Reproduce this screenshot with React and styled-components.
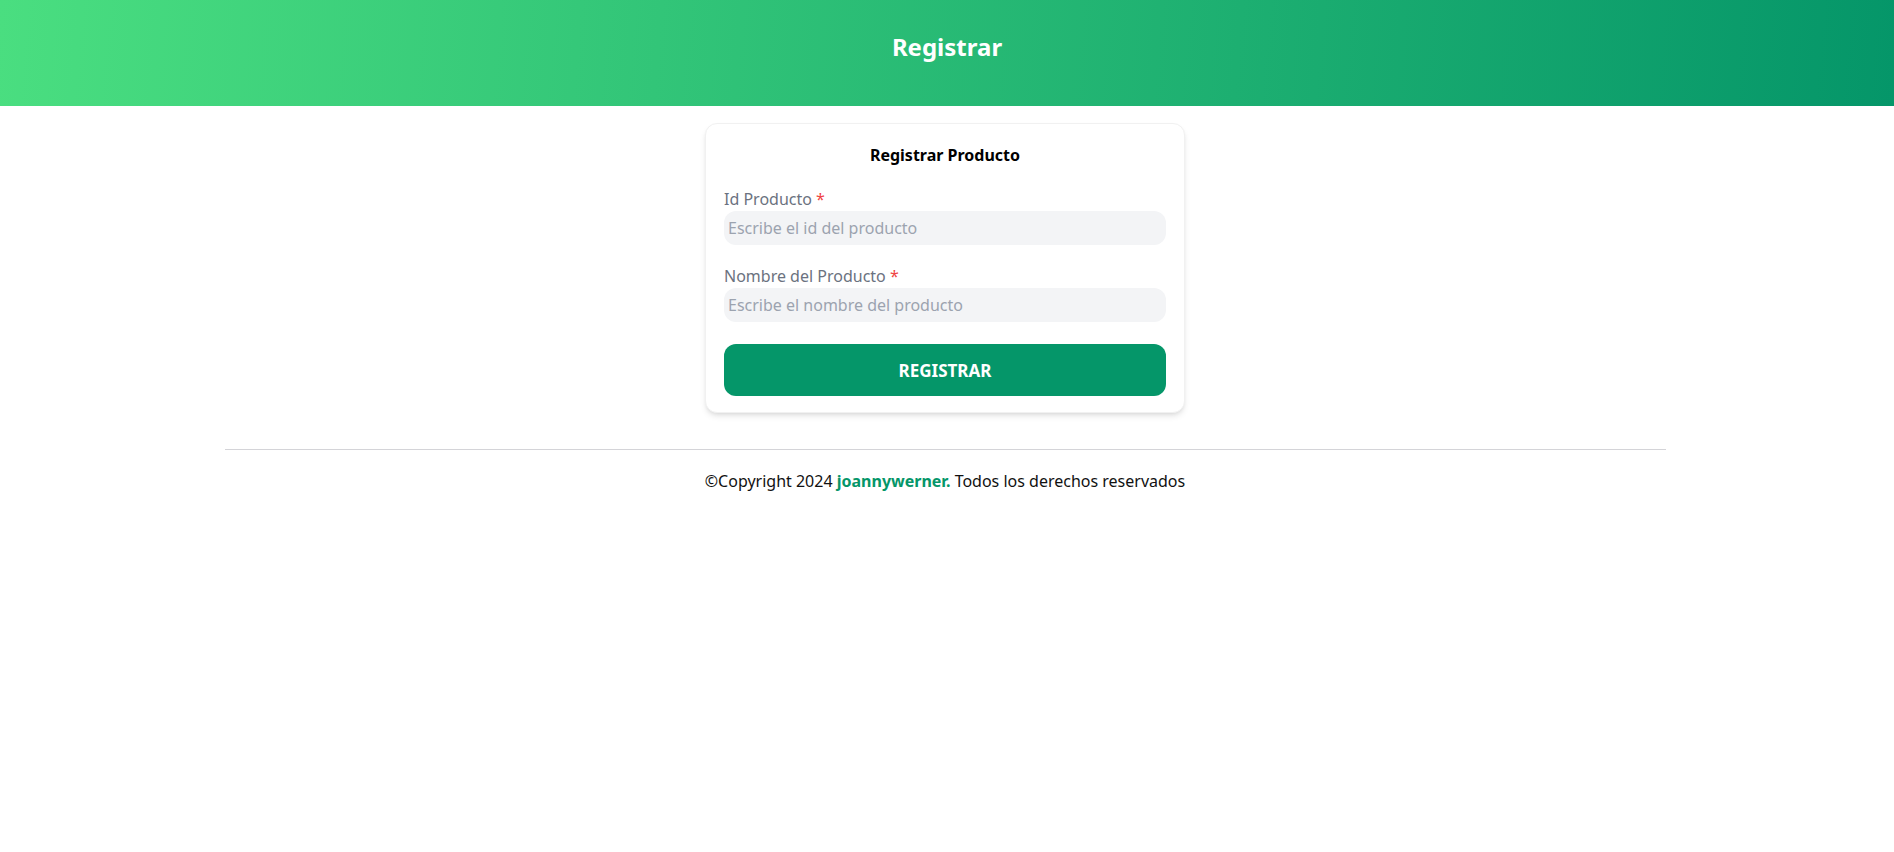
import styled, { createGlobalStyle } from "styled-components";

const GlobalStyle = createGlobalStyle`
  * {
    box-sizing: border-box;
  }
  body {
    margin: 0;
    background: #ffffff;
    font-family: "Noto Sans", "Open Sans", sans-serif;
    color: #111827;
  }
`;

const Header = styled.header`
  height: 106px;
  padding-top: 31px;
  background: linear-gradient(95deg, #4ade80, #059669);
  display: flex;
  justify-content: center;
  align-items: flex-start;
`;

const HeaderTitle = styled.h1`
  margin: 0;
  font-size: 24px;
  line-height: 32px;
  font-weight: 700;
  color: #ffffff;
`;

const Main = styled.main`
  display: flex;
  flex-direction: column;
  align-items: center;
  padding-right: 4px;
`;

const Card = styled.div`
  width: 480px;
  margin-top: 17px;
  padding: 17px 18px 16px;
  background: #ffffff;
  border: 1px solid #f1f1f1;
  border-radius: 12px;
  box-shadow: 0 4px 6px -1px rgba(0, 0, 0, 0.1), 0 2px 4px -2px rgba(0, 0, 0, 0.1);
`;

const CardTitle = styled.h2`
  margin: 0;
  font-size: 16px;
  line-height: 28px;
  font-weight: 700;
  color: #000000;
  text-align: center;
`;

const Field = styled.div`
  display: flex;
  flex-direction: column;
  margin-top: ${(props) => props.$top}px;
`;

const Label = styled.label`
  font-size: 16px;
  line-height: 24px;
  color: #6b7280;
`;

const Required = styled.span`
  color: #ef4444;
`;

const Input = styled.input`
  height: 34px;
  width: 100%;
  border: none;
  border-radius: 12px;
  background: #f3f4f6;
  padding: 0 4px;
  font-family: inherit;
  font-size: 16px;
  color: #111827;
  &:focus {
    outline: none;
  }
  &::placeholder {
    color: #9ca3af;
  }
`;

const SubmitButton = styled.button`
  width: 100%;
  height: 52px;
  margin-top: 22px;
  border: none;
  border-radius: 12px;
  background: #059669;
  color: #ffffff;
  font-family: inherit;
  font-size: 17px;
  font-weight: 700;
  cursor: pointer;
`;

const Divider = styled.hr`
  width: 1441px;
  margin: 36px 0 0;
  border: none;
  border-top: 1px solid #d4d4d8;
`;

const Footer = styled.p`
  margin: 19px 0 0;
  font-size: 16px;
  line-height: 24px;
  color: #111111;
`;

const Brand = styled.span`
  color: #059669;
  font-weight: 700;
`;

const App = () => {
  return (
    <>
      <GlobalStyle />
      <Header>
        <HeaderTitle>Registrar</HeaderTitle>
      </Header>

      <Main>
        <Card>
          <CardTitle>Registrar Producto</CardTitle>

          <form onSubmit={(e) => e.preventDefault()}>
            <Field $top={18}>
              <Label htmlFor="idProducto">
                Id Producto <Required>*</Required>
              </Label>
              <Input id="idProducto" type="text" placeholder="Escribe el id del producto" />
            </Field>

            <Field $top={19}>
              <Label htmlFor="nombreProducto">
                Nombre del Producto <Required>*</Required>
              </Label>
              <Input
                id="nombreProducto"
                type="text"
                placeholder="Escribe el nombre del producto"
              />
            </Field>

            <SubmitButton type="submit">REGISTRAR</SubmitButton>
          </form>
        </Card>

        <Divider />

        <Footer>
          ©Copyright 2024 <Brand>joannywerner.</Brand> Todos los derechos reservados
        </Footer>
      </Main>
    </>
  );
};

export default App;
